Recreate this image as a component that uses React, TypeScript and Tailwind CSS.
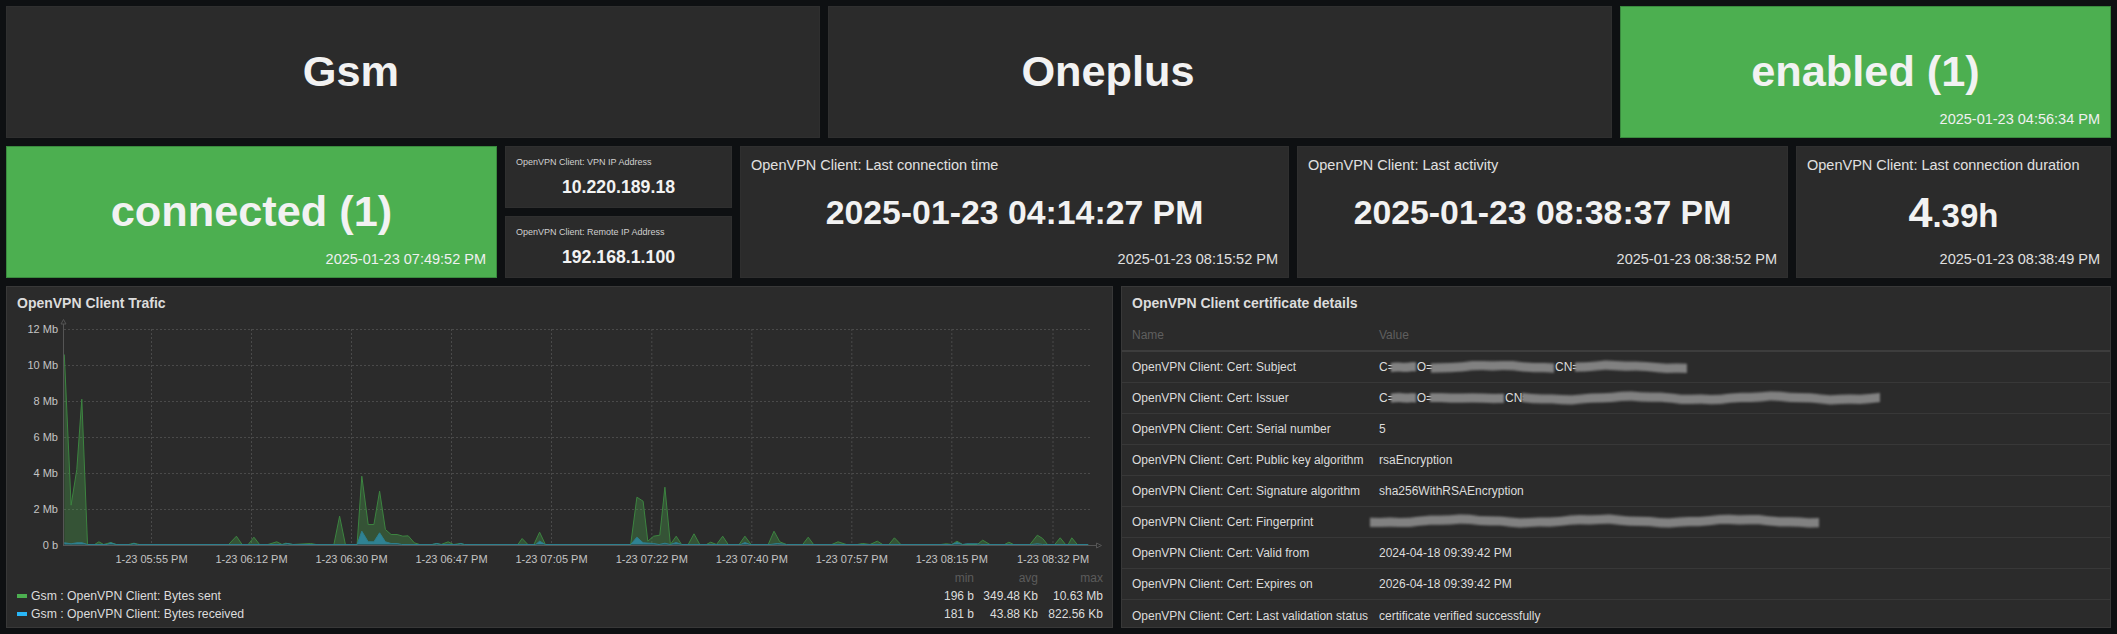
const Z4 = (x: number) => x / 2.8;
const Z5 = (x: number) => 550 + x / 2.75;
const BASE = 544.5;

const g4 = [[180,570],[199,118],[215,225],[229,436],[245,0],[265,0],[277,8],[290,0],[310,6],[325,0],[360,0],[375,4],[390,0],[640,0],[662,25],[678,0],[695,0],[711,22],[727,0],[750,0],[775,8],[790,0],[800,4],[820,0],[870,3],[885,0],[935,0],[951,85],[967,0],[1000,0],[1013,205],[1031,60],[1047,60],[1063,160],[1079,45],[1095,30],[1112,30],[1128,25],[1143,26],[1160,5],[1175,0],[1210,0],[1223,3],[1235,0],[1255,8],[1270,0],[1290,3],[1300,0],[1450,0],[1462,18],[1478,0],[1495,0],[1511,37],[1527,0]];
const g5 = [[222,0],[239,142],[256,130],[269,10],[285,25],[302,28],[316,172],[331,0],[347,25],[362,0],[380,0],[396,32],[412,0],[430,0],[442,7],[458,0],[475,25],[490,0],[520,0],[536,25],[553,0],[600,0],[616,40],[632,8],[650,0],[695,0],[710,22],[725,0],[775,0],[792,8],[815,0],[845,0],[860,3],[880,0],[900,10],[915,0],[932,0],[947,20],[965,0],[1075,0],[1090,2],[1105,0],[1119,10],[1135,0],[1175,0],[1190,13],[1210,0],[1250,0],[1262,7],[1275,0],[1320,0],[1340,28],[1355,18],[1368,0],[1388,0],[1403,20],[1418,0],[1425,0],[1435,20],[1450,0],[1480,0]];
const b4 = [[180,5],[199,2],[215,5],[230,5],[245,0],[300,0],[310,5],[325,0],[365,0],[375,3],[385,0],[790,0],[805,3],[820,0],[1000,0],[1013,40],[1031,8],[1047,8],[1063,35],[1079,8],[1095,3],[1112,3],[1125,0],[1210,0],[1223,3],[1235,0],[1280,0],[1290,3],[1300,0],[1500,0],[1511,10],[1527,0]];
const b5 = [[222,0],[239,22],[256,5],[285,3],[300,0],[316,4],[331,0],[347,6],[362,0],[525,0],[536,6],[550,0],[605,0],[625,3],[650,0],[1105,0],[1119,6],[1135,0],[1145,2],[1175,2],[1185,0],[1325,0],[1340,2],[1355,0],[1480,0]];

const toPts = (a: number[][], b: number[][]) => [
  ...a.map(([x, h]) => [Z4(x), BASE - h / 3]),
  ...b.map(([x, h]) => [Z5(x), BASE - h / 3]),
];
const str = (p: number[][]) => p.map(([x, y]) => `${x.toFixed(1)},${y.toFixed(1)}`).join(" ");
const green = toPts(g4, g5);
const blue = toPts(b4, b5);
const area = (p: number[][]) => `${p[0][0].toFixed(1)},${BASE} ${str(p)} ${p[p.length - 1][0].toFixed(1)},${BASE}`;

const yLabels = ["12 Mb", "10 Mb", "8 Mb", "6 Mb", "4 Mb", "2 Mb", "0 b"];
const xTicks: [number, string][] = [
  [151.5, "1-23 05:55 PM"], [251.5, "1-23 06:12 PM"], [351.5, "1-23 06:30 PM"], [451.5, "1-23 06:47 PM"], [551.5, "1-23 07:05 PM"],
  [651.8, "1-23 07:22 PM"], [751.8, "1-23 07:40 PM"], [851.8, "1-23 07:57 PM"], [951.8, "1-23 08:15 PM"], [1053, "1-23 08:32 PM"],
];

function Chart() {
  return (
    <svg width="1105" height="250" viewBox="7 319 1105 250" className="block shrink-0">
      {yLabels.map((l, i) => {
        const y = 329 + i * 36;
        return (
          <g key={l}>
            {i < 6 && <line x1="64" x2="1092" y1={y + 0.5} y2={y + 0.5} stroke="#4a4a4a" strokeDasharray="2 2" />}
            <text x="58" y={y + 3.5} textAnchor="end" fontSize="11" fill="#c4c4c4" fontFamily="Liberation Sans">{l}</text>
          </g>
        );
      })}
      {xTicks.map(([x, l]) => (
        <g key={l}>
          <line x1={x} x2={x} y1="329" y2="545" stroke="#4a4a4a" strokeDasharray="2 2" />
          <text x={x} y="563" textAnchor="middle" fontSize="11" fill="#c4c4c4" fontFamily="Liberation Sans">{l}</text>
        </g>
      ))}
      <polygon points={area(green)} fill="#4caf50" fillOpacity="0.3" />
      <polyline points={str(green)} fill="none" stroke="#3c8440" strokeWidth="1" />
      <polygon points={area(blue)} fill="#29a9e0" fillOpacity="0.55" />
      <polyline points={str(blue)} fill="none" stroke="#2d7f8e" strokeWidth="1" />
      <line x1="63.5" x2="63.5" y1="324" y2="546" stroke="#555555" />
      <line x1="63" x2="1097" y1="545.5" y2="545.5" stroke="#555555" />
      <path d="M61 324 L63.5 319.5 L66 324 Z" fill="#2b2b2b" stroke="#555555" />
      <path d="M1096.5 543 L1101.5 545.5 L1096.5 548 Z" fill="#2b2b2b" stroke="#555555" />
    </svg>
  );
}

function Smudge({ w, seed = 0, wave = 1.6, className = "" }: { w: number; seed?: number; wave?: number; className?: string }) {
  const h = 18;
  const n = Math.max(6, Math.round(w / 10));
  const top: string[] = [];
  const bot: string[] = [];
  for (let i = 0; i <= n; i++) {
    const x = (i / n) * w;
    const o = Math.sin(i * 0.45 + seed) * wave * Math.min(1, w / 120) + Math.sin(i * 1.7 + seed * 2) * 0.4;
    const m = h / 2;
    top.push(`${x.toFixed(1)},${(m - 4.6 + o).toFixed(1)}`);
    bot.unshift(`${x.toFixed(1)},${(m + 4.6 + o).toFixed(1)}`);
  }
  const id = `sm${seed}`;
  return (
    <svg width={w} height={h} viewBox={`0 0 ${w} ${h}`} className={`block shrink-0 blur-[1px] ${className}`}>
      <defs>
        <pattern id={id} width="2" height="3" patternUnits="userSpaceOnUse">
          <rect width="2" height="3" fill="#808080" />
          <rect width="1" height="3" fill="#929292" />
          <rect y="1" width="2" height="1" fill="#707070" />
        </pattern>
      </defs>
      <polygon points={[...top, ...bot].join(" ")} fill={`url(#${id})`} />
    </svg>
  );
}

function Stat({ label, value, time, w }: { label: string; value: React.ReactNode; time: string; w: string }) {
  return (
    <div className={`${w} relative flex flex-col bg-[#2b2b2b] border border-[#2f2f2f]`}>
      <div className="pl-[10px] pt-[10px] text-[14.5px] leading-[16px] text-[#e0e0e0]">{label}</div>
      <div className="flex flex-1 items-center justify-center pt-[1px] font-bold text-[#f2f2f2]">{value}</div>
      <div className="pr-[10px] pb-[10px] text-right text-[14.5px] leading-[16px] text-[#e0e0e0]">{time}</div>
    </div>
  );
}

function Big({ text, time, w, green, pad = "" }: { text: string; time?: string; w: string; green?: boolean; pad?: string }) {
  return (
    <div className={`${w} ${pad} relative flex items-center justify-center border ${green ? "bg-[#4caf50] border-[#3a8a3e]" : "bg-[#2b2b2b] border-[#2f2f2f]"}`}>
      <span className="text-[43.3px] leading-none font-bold text-[#f2f2f2]">{text}</span>
      {time && <span className="absolute right-[10px] bottom-[10px] text-[14.5px] leading-[16px] text-[#f0f0f0]">{time}</span>}
    </div>
  );
}

function Mini({ label, value }: { label: string; value: string }) {
  return (
    <div className="flex flex-1 flex-col bg-[#2b2b2b] border border-[#2f2f2f]">
      <div className="pl-[10px] pt-[10px] text-[9px] leading-[11px] text-[#d0d0d0]">{label}</div>
      <div className="flex-1 pt-[1px] text-center text-[17.7px] font-bold leading-[36px] text-[#f2f2f2]">{value}</div>
    </div>
  );
}

const rows: [string, React.ReactNode][] = [
  ["OpenVPN Client: Cert: Subject", (
    <div className="flex items-center">C=<Smudge w={25} seed={1} className="-ml-[4px]" /><span className="ml-[1px]">O=</span><Smudge w={123} seed={2} className="-ml-[2px]" /><span className="ml-[1px]">CN=</span><Smudge w={112} seed={3} className="-ml-[4px]" /></div>
  )],
  ["OpenVPN Client: Cert: Issuer", (
    <div className="flex items-center">C=<Smudge w={25} seed={4} className="-ml-[4px]" /><span className="ml-[1px]">O=</span><Smudge w={74} seed={5} wave={0.5} className="-ml-[3px]" /><span className="ml-[1px]">CN=</span><Smudge w={358} seed={6} className="-ml-[7px]" /></div>
  )],
  ["OpenVPN Client: Cert: Serial number", "5"],
  ["OpenVPN Client: Cert: Public key algorithm", "rsaEncryption"],
  ["OpenVPN Client: Cert: Signature algorithm", "sha256WithRSAEncryption"],
  ["OpenVPN Client: Cert: Fingerprint", <Smudge w={449} seed={7} className="-ml-[9px] -mt-[3px]" />],
  ["OpenVPN Client: Cert: Valid from", "2024-04-18 09:39:42 PM"],
  ["OpenVPN Client: Cert: Expires on", "2026-04-18 09:39:42 PM"],
  ["OpenVPN Client: Cert: Last validation status", "certificate verified successfully"],
];

function Legend({ color, name, vals }: { color: string; name: string; vals: string[] }) {
  return (
    <div className="flex h-[18px] items-center pl-[10px] pr-[9px] text-[12px] text-[#dcdcdc]">
      <span className={`mr-[4px] h-[4px] w-[10px] ${color}`} />
      <span className="flex-1 text-[12.25px]">{name}</span>
      <span className="w-[60px] text-right">{vals[0]}</span>
      <span className="w-[64px] text-right">{vals[1]}</span>
      <span className="w-[65px] text-right">{vals[2]}</span>
    </div>
  );
}

export default function App() {
  return (
    <div className="flex h-[634px] w-[2117px] flex-col gap-2 overflow-hidden bg-[#0e1012] p-[6px] font-['Liberation_Sans',sans-serif]">
      <div className="flex h-[132px] gap-2">
        <Big w="w-[814px]" pad="pr-[124px]" text="Gsm" />
        <Big w="w-[784px]" pad="pr-[224px]" text="Oneplus" />
        <Big w="w-[491px]" text="enabled (1)" time="2025-01-23 04:56:34 PM" green />
      </div>
      <div className="flex h-[132px] gap-2">
        <Big w="w-[491px]" text="connected (1)" time="2025-01-23 07:49:52 PM" green />
        <div className="flex w-[227px] flex-col gap-2">
          <Mini label="OpenVPN Client: VPN IP Address" value="10.220.189.18" />
          <Mini label="OpenVPN Client: Remote IP Address" value="192.168.1.100" />
        </div>
        <Stat w="w-[549px]" label="OpenVPN Client: Last connection time" time="2025-01-23 08:15:52 PM" value={<span className="text-[33.8px] leading-none">2025-01-23 04:14:27 PM</span>} />
        <Stat w="w-[491px]" label="OpenVPN Client: Last activity" time="2025-01-23 08:38:52 PM" value={<span className="text-[33.8px] leading-none">2025-01-23 08:38:37 PM</span>} />
        <Stat w="w-[315px]" label="OpenVPN Client: Last connection duration" time="2025-01-23 08:38:49 PM" value={<span className="text-[43px] leading-none">4<span className="text-[33px]">.39h</span></span>} />
      </div>
      <div className="flex h-[342px] gap-2">
        <div className="flex w-[1107px] flex-col border border-[#383838] bg-[#2b2b2b]">
          <div className="flex h-[32px] shrink-0 items-center pl-[10px] text-[14px] font-bold text-[#dcdcdc]">OpenVPN Client Trafic</div>
          <Chart />
          <div className="flex h-[18px] items-center justify-end pr-[9px] text-[12px] text-[#5c5c5c]">
            <span className="w-[60px] text-right">min</span>
            <span className="w-[64px] text-right">avg</span>
            <span className="w-[65px] text-right">max</span>
          </div>
          <Legend color="bg-[#4caf50]" name="Gsm : OpenVPN Client: Bytes sent" vals={["196 b", "349.48 Kb", "10.63 Mb"]} />
          <Legend color="bg-[#29b6f6]" name="Gsm : OpenVPN Client: Bytes received" vals={["181 b", "43.88 Kb", "822.56 Kb"]} />
        </div>
        <div className="flex w-[990px] flex-col border border-[#383838] bg-[#2b2b2b]">
          <div className="flex h-[32px] shrink-0 items-center pl-[10px] text-[14px] font-bold text-[#dcdcdc]">OpenVPN Client certificate details</div>
          <div className="flex h-[33px] shrink-0 items-center border-b-2 border-[#3d3d3d] pl-[10px] text-[12px] text-[#5f5f5f]">
            <span className="w-[247px]">Name</span>
            <span>Value</span>
          </div>
          {rows.map(([n, v], i) => (
            <div key={n} className={`flex h-[31px] shrink-0 items-center pl-[10px] text-[12px] text-[#dcdcdc] ${i < rows.length - 1 ? "border-b border-[#383838]" : ""}`}>
              <span className="w-[247px] shrink-0">{n}</span>
              <div>{v}</div>
            </div>
          ))}
        </div>
      </div>
    </div>
  );
}
